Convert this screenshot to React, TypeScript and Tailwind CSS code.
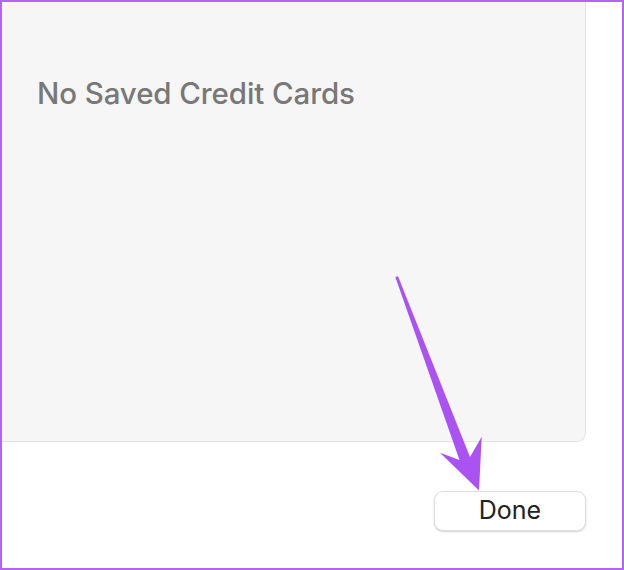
import React from "react";

const font = { fontFamily: "Inter, 'Noto Sans', sans-serif" };

function Arrow() {
  return (
    <svg className="absolute left-0 top-0" width="624" height="570" viewBox="0 0 624 570" aria-hidden>
      <path d="M395.3 277 L398 276.3 L470 457 L481.7 436.7 L479 490.5 L440 452.7 L459.5 460 Z" fill="#ab52f2" />
    </svg>
  );
}

export default function App() {
  return (
    <div className="relative h-[570px] w-[624px] overflow-hidden bg-white" style={font}>
      <div className="flex h-full w-full flex-col border-2 border-[#b563f5] bg-white">
        <div className="h-[440px] w-[584px] rounded-br-[9px] border-b border-r border-[#e3e3e3] bg-[#f6f6f6] pl-[35px] pt-[73px]">
          <p className="text-[29.5px] font-medium leading-[36px] tracking-[-0.1px] text-[#787878]">No Saved Credit Cards</p>
        </div>
        <div className="flex flex-1 items-start justify-end pr-[36px] pt-[49px]">
          <button className="flex h-[40px] w-[152px] items-center justify-center rounded-[9px] border border-[#dedede] bg-white text-[25px] text-[#222] shadow-[0_1px_2px_rgba(0,0,0,0.18)]">
            Done
          </button>
        </div>
      </div>
      <Arrow />
    </div>
  );
}
